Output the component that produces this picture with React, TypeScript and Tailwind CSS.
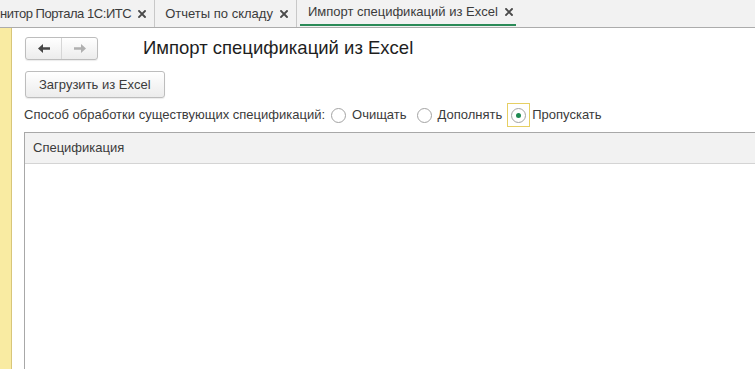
import React from 'react'

const TABS = [
  { title: 'нитор Портала 1С:ИТС', active: false, first: true },
  { title: 'Отчеты по складу', active: false, first: false },
  { title: 'Импорт спецификаций из Excel', active: true, first: false },
]

function CloseX() {
  return (
    <svg width="8" height="8" viewBox="0 0 8 8" className="shrink-0">
      <path d="M1 1 L7 7 M7 1 L1 7" stroke="#4a4a4a" strokeWidth="1.9" strokeLinecap="square" />
    </svg>
  )
}

function Arrow({ dir, color }: { dir: 'left' | 'right'; color: string }) {
  return (
    <svg width="12" height="9" viewBox="0 0 12 9" className={dir === 'right' ? 'rotate-180' : ''}>
      <polygon points="0,4.5 5,0 5,3.2 12,3.2 12,5.8 5,5.8 5,9" fill={color} />
    </svg>
  )
}

function Circle({ checked }: { checked?: boolean }) {
  return (
    <span className="w-[15px] h-[15px] shrink-0 rounded-full border border-[#a3a3a3] bg-white flex items-center justify-center">
      {checked && <span className="w-[5px] h-[5px] rounded-full bg-[#1f8a52]" />}
    </span>
  )
}

export default function App() {
  return (
    <div className="w-[755px] h-[369px] overflow-hidden flex flex-col bg-white text-[13px] text-[#3b3b3b] font-['Liberation_Sans',Arial,sans-serif]">
      {/* tabs */}
      <div className="h-[28px] shrink-0 flex bg-[#f2f2f2] border-b border-[#acacac] overflow-hidden">
        {TABS.map((t, i) => (
          <div key={i} className={`flex items-stretch shrink-0 ${t.active ? 'px-[3px]' : 'border-r border-[#c8c8c8]'}`}>
            {t.active ? (
              <div className="flex items-center gap-[7px] pl-[8px] pr-[3px] border-b-2 border-[#2a8a57] mb-px">
                <span>{t.title}</span>
                <CloseX />
              </div>
            ) : (
              <div className={`flex items-center gap-[7px] ${t.first ? 'pl-0 pr-[8px]' : 'pl-[10px] pr-[8px]'}`}>
                <span className={t.first ? 'tracking-[-0.45px]' : ''}>{t.title}</span>
                <CloseX />
              </div>
            )}
          </div>
        ))}
      </div>

      <div className="flex flex-1 min-h-0">
        <div className="w-[12px] shrink-0 bg-[#f9eba2] border-r border-[#d8c67a]" />

        <div className="flex-1 min-w-0 pl-[12px] pt-[9px] flex flex-col">
          <div className="flex items-center h-[23px]">
            <div className="ml-px flex h-[23px] w-[73px] rounded-[3px] border border-[#bdbdbd] bg-gradient-to-b from-white to-[#ececec] shadow-[0_1px_1px_rgba(0,0,0,0.08)]">
              <button className="flex-1 flex items-center justify-center border-r border-[#d6d6d6]">
                <Arrow dir="left" color="#454545" />
              </button>
              <button className="flex-1 flex items-center justify-center">
                <Arrow dir="right" color="#b0b0b0" />
              </button>
            </div>
            <h1 className="ml-[45px] text-[18.5px] text-[#1e1e1e] leading-none">Импорт спецификаций из Excel</h1>
          </div>

          <button className="ml-px mt-[11px] self-start h-[27px] px-[13px] rounded-[3px] border border-[#bdbdbd] bg-gradient-to-b from-white to-[#ececec] shadow-[0_1px_1px_rgba(0,0,0,0.08)] text-[#3b3b3b]">
            Загрузить из Excel
          </button>

          <div className="mt-[5px] h-[24px] flex items-center">
            <span>Способ обработки существующих спецификаций:</span>
            <span className="ml-[6px]"><Circle /></span>
            <span className="ml-[6px]">Очищать</span>
            <span className="ml-[10px]"><Circle /></span>
            <span className="ml-[6px]">Дополнять</span>
            <span className="ml-[5px] w-[23px] h-[24px] border border-[#e6cf63] flex items-center justify-center">
              <Circle checked />
            </span>
            <span className="ml-[2px]">Пропускать</span>
          </div>

          <div className="mt-[5px] flex-1 border-l border-t border-[#a8a8a8] bg-white">
            <div className="h-[31px] bg-[#f2f2f2] border-b border-[#d4d4d4] flex items-center pl-[8px]">
              Спецификация
            </div>
          </div>
        </div>
      </div>
    </div>
  )
}
